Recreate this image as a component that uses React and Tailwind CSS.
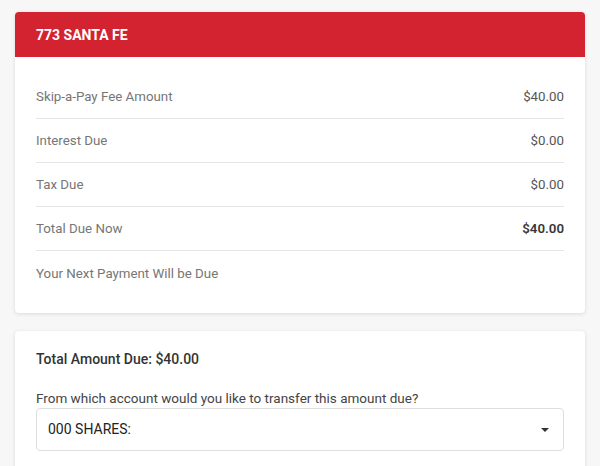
const rows = [
  { label: "Skip-a-Pay Fee Amount", value: "$40.00" },
  { label: "Interest Due", value: "$0.00" },
  { label: "Tax Due", value: "$0.00" },
  { label: "Total Due Now", value: "$40.00", bold: true },
  { label: "Your Next Payment Will be Due", value: "" },
];

function SummaryRow({ label, value, bold, last }) {
  return (
    <div
      className={
        "flex items-center justify-between h-[44px] pt-[1px] " +
        (last ? "" : "border-b border-[#e6e6e6]")
      }
    >
      <span className="text-[13.3px] text-[#767676]">{label}</span>
      <span
        className={
          bold
            ? "text-[13.3px] font-semibold text-[#383838]"
            : "text-[13.3px] text-[#555]"
        }
      >
        {value}
      </span>
    </div>
  );
}

export default function App() {
  return (
    <div className="min-h-screen bg-[#f7f7f7] px-[15px] pt-[12px] font-['Roboto',sans-serif]">
      <div className="bg-white rounded-[4px] shadow-[0_1px_4px_rgba(0,0,0,0.12)]">
        <div className="bg-[#d32330] rounded-t-[4px] h-[45px] flex items-center px-[21px] pt-[1px]">
          <h2 className="text-white font-bold text-[14px]">773 SANTA FE</h2>
        </div>
        <div className="px-[21px] pt-[18px] pb-[18px]">
          {rows.map((r, i) => (
            <SummaryRow key={r.label} {...r} last={i === rows.length - 1} />
          ))}
        </div>
      </div>

      <div className="bg-white rounded-[4px] shadow-[0_1px_4px_rgba(0,0,0,0.12)] mt-[18px] px-[21px] pt-[18px] pb-[20px]">
        <p className="text-[14px] font-medium text-[#333] leading-[20px]">
          Total Amount Due: $40.00
        </p>
        <p className="mt-[19px] text-[13.5px] text-[#444] leading-[20px]">
          From which account would you like to transfer this amount due?
        </p>
        <div className="h-[43px] border border-[#dedede] rounded-[4px] flex items-center justify-between pl-[11px] pr-[11px]">
          <span className="text-[14px] text-[#222]">000 SHARES:</span>
          <svg width="8" height="4" viewBox="0 0 8 4" className="mr-[3px]">
            <path d="M0 0 L8 0 L4 4 Z" fill="#333" />
          </svg>
        </div>
      </div>
    </div>
  );
}
